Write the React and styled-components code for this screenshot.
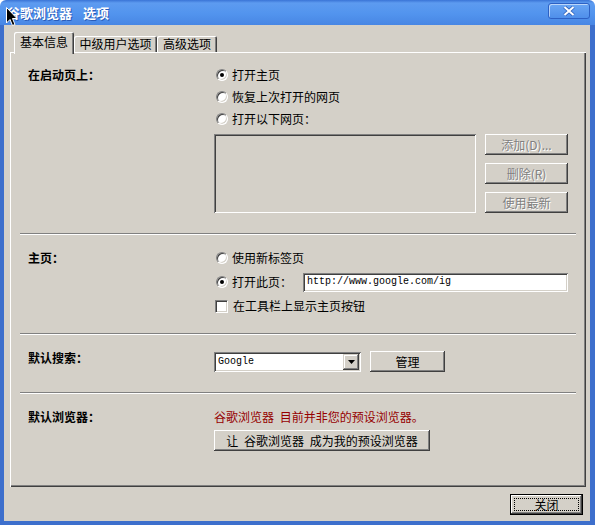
import React from 'react';
import styled, { createGlobalStyle } from 'styled-components';

const FACE = '#d4d0c8';
const FRAME = '#3d6fcc';

const GlobalStyle = createGlobalStyle`
  html, body { margin: 0; padding: 0; background: #fff; }
  body {
    font-family: "Noto Sans CJK SC", "Liberation Sans", sans-serif;
    font-size: 12px;
    color: #000;
  }
`;

const Window = styled.div`
  position: relative;
  width: 595px;
  height: 525px;
  display: flex;
  flex-direction: column;
`;

const TitleBar = styled.div`
  height: 25px;
  box-sizing: border-box;
  display: flex;
  align-items: center;
  justify-content: space-between;
  padding: 0 5px 0 7px;
  border-radius: 6px 6px 0 0;
  background: linear-gradient(to bottom, #3a74d6 0%, #5d9bf0 12%, #5294ee 55%, #4886e4 100%);
  color: #fff;
  font-weight: bold;
  font-size: 13px;
`;

const TitleText = styled.div`
  display: flex;
  gap: 11px;
  line-height: 1;
  text-shadow: 1px 1px #2a5cb8;
`;

const CloseBox = styled.div`
  align-self: flex-start;
  margin-top: 3px;
  width: 42px;
  height: 16px;
  box-sizing: border-box;
  border: 1px solid #2d61c4;
  border-radius: 3px;
  box-shadow: inset 1px 1px rgba(255, 255, 255, 0.55);
  background: linear-gradient(to bottom, #6aa6f4, #4f8fea);
  display: flex;
  align-items: center;
  justify-content: center;
`;

const Frame = styled.div`
  flex: 1;
  display: flex;
  flex-direction: column;
  background: ${FACE};
  border-left: 4px solid ${FRAME};
  border-right: 5px solid ${FRAME};
  border-bottom: 4px solid ${FRAME};
  padding: 7px 4px 6px 6px;
`;

const TabStrip = styled.div`
  display: flex;
  align-items: flex-end;
  height: 20px;
  padding-left: 4px;
  position: relative;
  z-index: 1;
`;

const Tab = styled.div`
  box-sizing: border-box;
  width: ${p => p.$w}px;
  height: ${p => (p.$active ? 22 : 16)}px;
  margin-bottom: ${p => (p.$active ? -2 : 0)}px;
  padding-bottom: ${p => (p.$active ? 2 : 0)}px;
  display: flex;
  align-items: center;
  justify-content: center;
  background: ${FACE};
  border-radius: 2px 2px 0 0;
  box-shadow: inset 1px 1px #fff, inset -1px 0 #404040, inset -2px 0 #808080;
  line-height: 1;
`;

const Panel = styled.div`
  box-sizing: border-box;
  height: 435px;
  display: flex;
  flex-direction: column;
  box-shadow: inset 1px 1px #fff, inset -1px -1px #404040, inset -2px -2px #808080;
`;

const Section = styled.div`
  display: grid;
  grid-template-columns: 186px 1fr;
  align-items: start;
  padding: ${p => p.$top}px 0 ${p => p.$bottom}px 18px;
  flex: ${p => (p.$fill ? 1 : 'none')};
`;

const Label = styled.div`
  font-weight: bold;
  line-height: ${p => p.$lh}px;
  height: ${p => p.$lh}px;
`;

const Controls = styled.div`
  display: flex;
  flex-direction: column;
  align-items: flex-start;
`;

const Row = styled.div`
  display: flex;
  align-items: center;
  height: ${p => p.$h}px;
  line-height: 1;
  color: ${p => p.$color || '#000'};
  word-spacing: 3px;
`;

const Separator = styled.div`
  margin: 0 10px;
  border-top: 1px solid #808080;
  border-bottom: 1px solid #fff;
`;

const RadioDot = styled.span`
  width: 12px;
  height: 12px;
  box-sizing: border-box;
  margin: 0 4px 0 2px;
  border-radius: 50%;
  border: 1px solid;
  border-color: #808080 #fff #fff #808080;
  box-shadow: inset 1px 1px #404040, inset -1px -1px ${FACE};
  background: #fff;
  display: flex;
  align-items: center;
  justify-content: center;
  &::after {
    content: '';
    width: 4px;
    height: 4px;
    border-radius: 50%;
    background: ${p => (p.$on ? '#000' : 'transparent')};
  }
`;

const CheckBox = styled.span`
  width: 13px;
  height: 13px;
  box-sizing: border-box;
  margin: 0 5px 0 1px;
  border: 1px solid;
  border-color: #808080 #fff #fff #808080;
  box-shadow: inset 1px 1px #404040, inset -1px -1px ${FACE};
  background: #fff;
`;

const Button = styled.div`
  box-sizing: border-box;
  width: ${p => p.$w}px;
  height: 21px;
  flex: none;
  display: flex;
  align-items: center;
  justify-content: center;
  background: ${FACE};
  box-shadow: inset -1px -1px #404040, inset 1px 1px #fff, inset -2px -2px #808080;
  color: ${p => (p.$disabled ? '#808080' : '#000')};
  text-shadow: ${p => (p.$disabled ? '1px 1px #fff' : 'none')};
  line-height: 1;
  word-spacing: 3px;
`;

const DefaultButton = styled(Button)`
  position: relative;
  border: 1px solid #000;
  &::after {
    content: '';
    position: absolute;
    inset: 3px;
    border: 1px dotted #000;
  }
`;

const ListRow = styled.div`
  display: flex;
  gap: 9px;
  margin-top: 4px;
`;

const ListBox = styled.div`
  width: 262px;
  height: 79px;
  box-sizing: border-box;
  background: ${FACE};
  box-shadow: inset 1px 1px #808080, inset -1px -1px #fff, inset 2px 2px #404040, inset -2px -2px ${FACE};
`;

const ButtonStack = styled.div`
  display: flex;
  flex-direction: column;
  gap: 8px;
`;

const Sunken = styled.div`
  box-sizing: border-box;
  width: ${p => p.$w}px;
  height: ${p => p.$h}px;
  background: #fff;
  box-shadow: inset 1px 1px #808080, inset -1px -1px #fff, inset 2px 2px #404040, inset -2px -2px ${FACE};
  display: flex;
  align-items: center;
  padding: 2px 2px 2px 4px;
  margin-left: ${p => p.$ml || 0}px;
  font-family: "Liberation Mono", "DejaVu Sans Mono", monospace;
  font-size: 10px;
`;

const SelectText = styled.span`
  flex: 1;
`;

const DropButton = styled.div`
  width: 16px;
  height: 16px;
  box-sizing: border-box;
  background: ${FACE};
  box-shadow: inset -1px -1px #404040, inset 1px 1px ${FACE}, inset -2px -2px #808080, inset 2px 2px #fff;
  display: flex;
  align-items: center;
  justify-content: center;
`;

const InlineRow = styled.div`
  display: flex;
  align-items: center;
  gap: 9px;
`;

const Footer = styled.div`
  display: flex;
  justify-content: flex-end;
  padding-right: 3px;
  margin-top: 7px;
`;

const Cursor = styled.svg`
  position: absolute;
  left: 6px;
  top: 7px;
`;

const Radio = ({ on, children }) => (
  <Row $h={22}>
    <RadioDot $on={on} />
    {children}
  </Row>
);

export default function App() {
  return (
    <>
      <GlobalStyle />
      <Window>
        <TitleBar>
          <TitleText>
            <span>谷歌浏览器</span>
            <span>选项</span>
          </TitleText>
          <CloseBox>
            <svg width="12" height="10" viewBox="0 0 12 10">
              <path d="M1.5 1 L10.5 9 M10.5 1 L1.5 9" stroke="#2f5fb8" strokeWidth="3.6" />
              <path d="M1.5 1 L10.5 9 M10.5 1 L1.5 9" stroke="#fff" strokeWidth="2" />
            </svg>
          </CloseBox>
        </TitleBar>
        <Frame>
          <TabStrip>
            <Tab $w={60} $active>基本信息</Tab>
            <Tab $w={83}>中级用户选项</Tab>
            <Tab $w={60}>高级选项</Tab>
          </TabStrip>
          <Panel>
            <Section $top={12} $bottom={20}>
              <Label $lh={22}>在启动页上：</Label>
              <Controls>
                <Radio on>打开主页</Radio>
                <Radio>恢复上次打开的网页</Radio>
                <Radio>打开以下网页：</Radio>
                <ListRow>
                  <ListBox />
                  <ButtonStack>
                    <Button $w={83} $disabled>添加(D)...</Button>
                    <Button $w={83} $disabled>删除(R)</Button>
                    <Button $w={83} $disabled>使用最新</Button>
                  </ButtonStack>
                </ListRow>
              </Controls>
            </Section>
            <Separator />
            <Section $top={11} $bottom={15}>
              <Label $lh={24}>主页：</Label>
              <Controls>
                <Row $h={24}>
                  <RadioDot />
                  使用新标签页
                </Row>
                <Row $h={24}>
                  <RadioDot $on />
                  打开此页：
                  <Sunken $w={265} $h={19} $ml={11}>http://www.google.com/ig</Sunken>
                </Row>
                <Row $h={24}>
                  <CheckBox />
                  在工具栏上显示主页按钮
                </Row>
              </Controls>
            </Section>
            <Separator />
            <Section $top={16} $bottom={20}>
              <Label $lh={14}>默认搜索：</Label>
              <Controls>
                <InlineRow>
                  <Sunken $w={147} $h={20}>
                    <SelectText>Google</SelectText>
                    <DropButton>
                      <svg width="7" height="4" viewBox="0 0 7 4">
                        <path d="M0 0 H7 L3.5 4 Z" fill="#000" />
                      </svg>
                    </DropButton>
                  </Sunken>
                  <Button $w={75}>管理</Button>
                </InlineRow>
              </Controls>
            </Section>
            <Separator />
            <Section $top={15} $bottom={0} $fill>
              <Label $lh={16}>默认浏览器：</Label>
              <Controls>
                <Row $h={16} $color="#960000">谷歌浏览器 目前并非您的预设浏览器。</Row>
                <Button $w={216} style={{ marginTop: 5 }}>让 谷歌浏览器 成为我的预设浏览器</Button>
              </Controls>
            </Section>
          </Panel>
          <Footer>
            <DefaultButton $w={73}>关闭</DefaultButton>
          </Footer>
        </Frame>
        <Cursor width="12" height="20" viewBox="0 0 12 20">
          <path d="M0.5 0.5 V16 L4 12.5 L6.5 18.5 L9 17.5 L6.5 11.5 H11 Z" fill="#000" stroke="#fff" strokeWidth="1" />
        </Cursor>
      </Window>
    </>
  );
}
